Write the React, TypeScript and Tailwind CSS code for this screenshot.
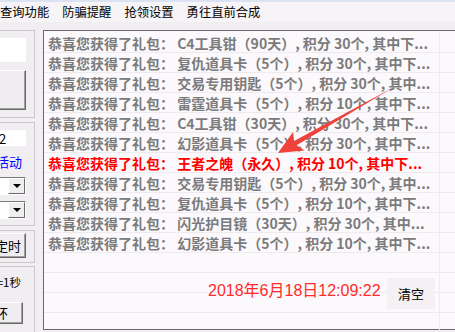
const rows = [
  { text: '恭喜您获得了礼包： C4工具钳（90天）, 积分 30个, 其中下...' },
  { text: '恭喜您获得了礼包： 复仇道具卡（5个）, 积分 30个, 其中下...' },
  { text: '恭喜您获得了礼包： 交易专用钥匙（5个）, 积分 30个, 其中...' },
  { text: '恭喜您获得了礼包： 雷霆道具卡（5个）, 积分 10个, 其中下...' },
  { text: '恭喜您获得了礼包： C4工具钳（30天）, 积分 30个, 其中下...' },
  { text: '恭喜您获得了礼包： 幻影道具卡（5个）, 积分 30个, 其中下...' },
  { text: '恭喜您获得了礼包： 王者之魄（永久）, 积分 10个, 其中下...', hot: true },
  { text: '恭喜您获得了礼包： 交易专用钥匙（5个）, 积分 30个, 其中...' },
  { text: '恭喜您获得了礼包： 复仇道具卡（5个）, 积分 10个, 其中下...' },
  { text: '恭喜您获得了礼包： 闪光护目镜（30天）, 积分 30个, 其中...' },
  { text: '恭喜您获得了礼包： 幻影道具卡（5个）, 积分 10个, 其中下...' },
]

const menus = ['查询功能', '防骗提醒', '抢领设置', '勇往直前合成']

const font = { fontFamily: '"Noto Sans CJK SC", "Liberation Sans", sans-serif' }

function Button({ label, className }: { label: string; className: string }) {
  return (
    <div
      className={`flex items-center justify-end bg-[#f0edf0] border border-t-white border-l-white border-b-[#6a6a6a] border-r-[#6a6a6a] shadow-[inset_-1px_-1px_0_#a0a0a0] text-[13px] text-black ${className}`}
    >
      {label}
    </div>
  )
}

function Combo() {
  return (
    <div className="flex h-[18px] w-[40px] border border-t-[#7a7a7a] border-l-[#7a7a7a] border-b-white border-r-white bg-white">
      <div className="flex-1" />
      <div className="flex w-[17px] items-center justify-center bg-[#f0edf0] border border-t-white border-l-white border-b-[#6a6a6a] border-r-[#6a6a6a]">
        <div className="h-0 w-0 border-l-[4px] border-r-[4px] border-t-[4px] border-l-transparent border-r-transparent border-t-black" />
      </div>
    </div>
  )
}

function Group({ className, children }: { className: string; children: React.ReactNode }) {
  return (
    <div
      className={`-ml-[20px] w-[55px] border-t border-r border-b border-[#cbc7cb] flex flex-col items-end pr-[8px] ${className}`}
    >
      {children}
    </div>
  )
}

export default function App() {
  return (
    <div className="relative w-[455px] h-[332px] overflow-hidden bg-[#f1eef1]" style={font}>
      {/* menu bar */}
      <div className="h-[2px] bg-[#dbe2f2]" />
      <div className="flex h-[20px] items-center gap-[13px] bg-[#f6f4f7] text-[12.3px] text-black">
        {menus.map((m) => (
          <span key={m} className="leading-none">
            {m}
          </span>
        ))}
      </div>

      <div className="flex pt-[8px]">
        {/* left panel, partly off screen */}
        <div className="w-[43px] shrink-0 overflow-hidden">
          <Group className="h-[88px] pt-[7px]">
            <div className="h-[24px] w-[40px] bg-white" />
            <Button label="" className="mt-[8px] h-[40px] w-[40px]" />
          </Group>

          <Group className="mt-[4px] h-[104px] pt-[7px]">
            <div className="flex h-[16px] w-[30px] items-center bg-white pl-[3px] text-[13px] leading-none text-black">
              2
            </div>
            <div className="mt-[9px] mr-[4px] whitespace-nowrap text-[13px] leading-none text-[#0000ff]">
              参与活动
            </div>
            <div className="mt-[9px]">
              <Combo />
            </div>
            <div className="mt-[6px]">
              <Combo />
            </div>
          </Group>

          <Group className="mt-[4px] h-[33px] pt-[2px]">
            <Button label="开启定时" className="h-[25px] w-[60px] whitespace-nowrap pr-[4px]" />
          </Group>

          <Group className="mt-[3px] h-[70px] pt-[10px]">
            <div className="mr-[5px] whitespace-nowrap text-[11.5px] leading-none text-black">间隔=1秒</div>
            <Button label="循环" className="mt-[13px] mr-[3px] h-[22px] w-[50px] whitespace-nowrap pr-[14px]" />
          </Group>
        </div>

        {/* list view */}
        <div className="h-[300px] flex-1 border-t border-l border-b border-[#6b6b6b] bg-[#fbf9fb] pt-[2px]">
          {Array.from({ length: 15 }).map((_, i) => {
            const r = rows[i]
            return (
              <div key={i} className="flex h-[20px] border-b border-[#eeeaee]">
                <div className="flex w-[396px] items-center overflow-hidden border-r border-[#eeeaee] pl-[4px]">
                  {r && (
                    <span
                      className={`whitespace-nowrap text-[14px] font-bold leading-none ${
                        r.hot ? 'text-[#ff0000]' : 'text-[#7b7b7b]'
                      }`}
                    >
                      {r.text}
                    </span>
                  )}
                </div>
              </div>
            )
          })}
        </div>
      </div>

      {/* time + clear button over the list */}
      <div
        className="absolute left-[208px] top-[283px] whitespace-nowrap text-[16px] leading-none text-[#ff2b2b]"
        style={{ fontFamily: '"Liberation Sans", "Noto Sans CJK SC", sans-serif' }}
      >
        2018年6月18日12:09:22
      </div>
      <div className="absolute left-[387px] top-[278px] flex h-[31px] w-[48px] items-center justify-center bg-[#f4f0f4] text-[13px] text-black">
        清空
      </div>

      {/* annotation arrow */}
      <svg className="pointer-events-none absolute inset-0" width="455" height="332" viewBox="0 0 455 332">
        <polygon
          points="394,87 296.6,145.3 304.5,150.5 278,153 293,132 294.1,140.9"
          fill="#f0413a"
        />
      </svg>
    </div>
  )
}
